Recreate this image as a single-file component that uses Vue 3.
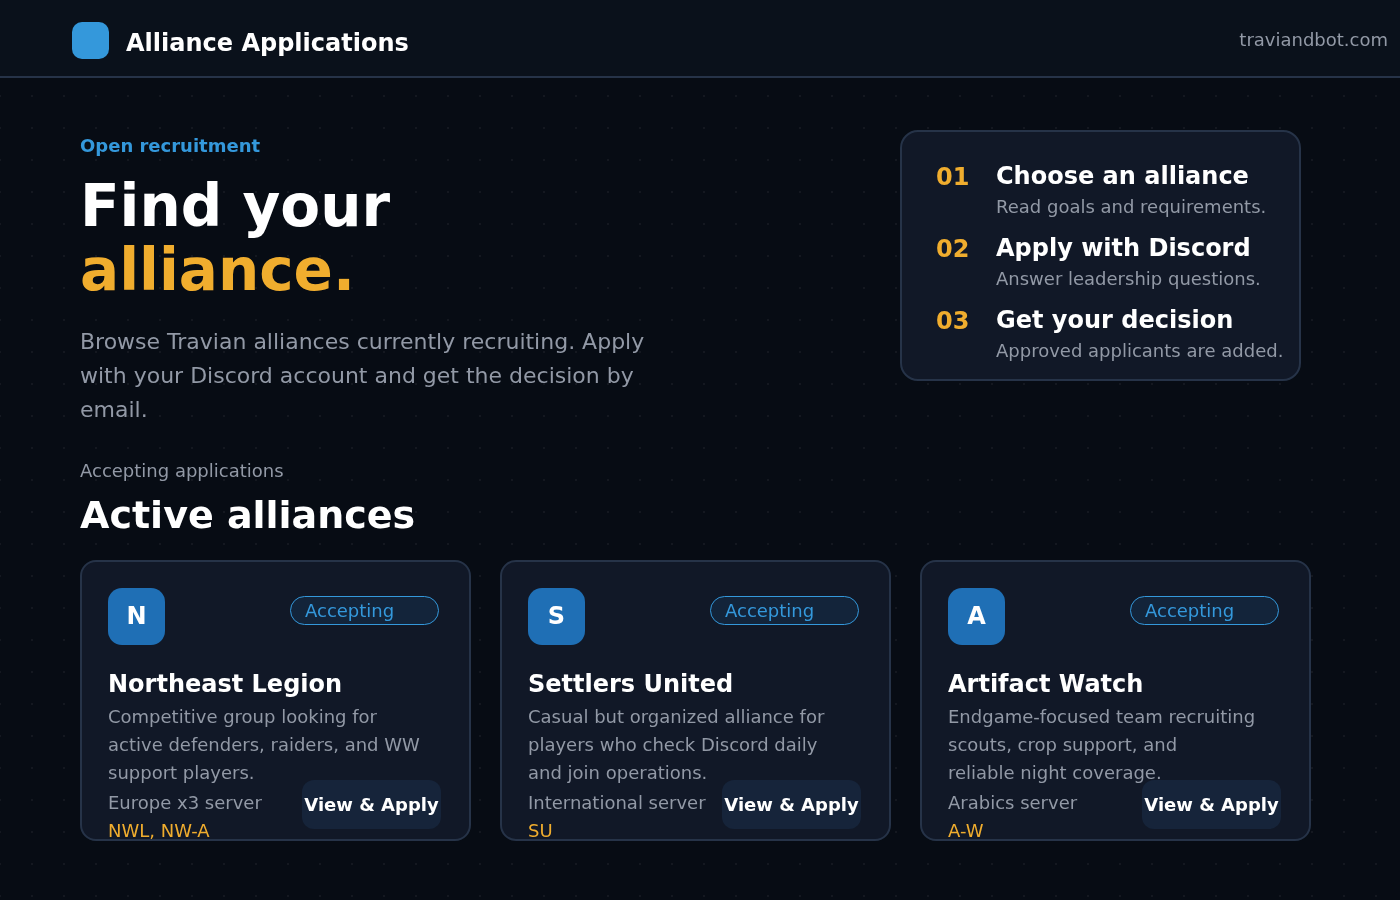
<template>
  <div class="page">
    <header class="topbar">
      <div class="brand">
        <span class="logo"></span>
        <span class="brand-name">Alliance Applications</span>
      </div>
      <a class="site-link">traviandbot.com</a>
    </header>

    <main class="content">
      <section class="hero">
        <div class="hero-text">
          <p class="eyebrow">Open recruitment</p>
          <h1>Find your<br /><span class="accent">alliance.</span></h1>
          <p class="lead">Browse Travian alliances currently recruiting. Apply with your Discord account and get the decision by email.</p>
        </div>
        <ol class="steps">
          <li v-for="step in steps" :key="step.num" class="step">
            <span class="step-num">{{ step.num }}</span>
            <div>
              <div class="step-title">{{ step.title }}</div>
              <div class="step-desc">{{ step.desc }}</div>
            </div>
          </li>
        </ol>
      </section>

      <section class="listing">
        <p class="listing-label">Accepting applications</p>
        <h2>Active alliances</h2>
        <div class="cards">
          <article v-for="a in alliances" :key="a.name" class="card">
            <div class="card-top">
              <span class="avatar">{{ a.name[0] }}</span>
              <span class="badge">Accepting</span>
            </div>
            <h3>{{ a.name }}</h3>
            <p class="card-desc">
              <span v-for="line in a.desc" :key="line" class="desc-line">{{ line }}</span>
            </p>
            <div class="card-foot">
              <div class="card-meta">
                <div class="server">{{ a.server }}</div>
                <div class="tags">{{ a.tags }}</div>
              </div>
              <button class="apply">View &amp; Apply</button>
            </div>
          </article>
        </div>
      </section>
    </main>
  </div>
</template>

<script setup>
const steps = [
  { num: '01', title: 'Choose an alliance', desc: 'Read goals and requirements.' },
  { num: '02', title: 'Apply with Discord', desc: 'Answer leadership questions.' },
  { num: '03', title: 'Get your decision', desc: 'Approved applicants are added.' }
]

const alliances = [
  {
    name: 'Northeast Legion',
    desc: ['Competitive group looking for', 'active defenders, raiders, and WW', 'support players.'],
    server: 'Europe x3 server',
    tags: 'NWL, NW-A'
  },
  {
    name: 'Settlers United',
    desc: ['Casual but organized alliance for', 'players who check Discord daily', 'and join operations.'],
    server: 'International server',
    tags: 'SU'
  },
  {
    name: 'Artifact Watch',
    desc: ['Endgame-focused team recruiting', 'scouts, crop support, and', 'reliable night coverage.'],
    server: 'Arabics server',
    tags: 'A-W'
  }
]
</script>

<style>
html,
body {
  margin: 0;
  background: #070c14;
}
</style>

<style scoped>
.page {
  min-height: 900px;
  box-sizing: border-box;
  font-family: "DejaVu Sans", sans-serif;
  color: #fff;
  background-color: #070c14;
  background-image: radial-gradient(rgba(255, 255, 255, 0.05) 1px, transparent 1px);
  background-size: 32px 32px;
  background-position: -16px -16px;
}

.topbar {
  display: flex;
  justify-content: space-between;
  height: 78px;
  box-sizing: border-box;
  padding: 0 12px 0 72px;
  background: #0a111b;
  border-bottom: 2px solid #263348;
  will-change: transform;
}

.brand {
  display: flex;
  align-items: flex-start;
  gap: 17px;
  padding-top: 22px;
}

.logo {
  width: 37px;
  height: 37px;
  border-radius: 10px;
  background: #3498db;
}

.brand-name {
  font-size: 24px;
  line-height: 42px;
  font-weight: 700;
}

.site-link {
  margin-top: 29px;
  font-size: 18px;
  line-height: 22px;
  color: #9299a6;
}

.content {
  padding: 52px 90px 0 80px;
  will-change: transform;
}

.hero {
  display: flex;
  justify-content: space-between;
  align-items: flex-start;
  width: 1221px;
}

.hero-text {
  width: 580px;
}

.eyebrow {
  margin: 0;
  font-size: 18px;
  line-height: 32px;
  font-weight: 700;
  color: #3498db;
}

h1 {
  margin: 12px 0 0;
  font-size: 58px;
  line-height: 64px;
  font-weight: 700;
}

.accent {
  color: #f0ad2e;
}

.lead {
  margin: 23px 0 0;
  font-size: 22px;
  line-height: 34px;
  color: #9299a6;
}

.steps {
  list-style: none;
  margin: 0;
  width: 401px;
  height: 251px;
  box-sizing: border-box;
  padding: 27px 0 0 34px;
  background: #111827;
  border: 2px solid #263348;
  border-radius: 18px;
}

.step {
  display: flex;
  gap: 26px;
  height: 72px;
}

.step-num {
  width: 34px;
  font-size: 24px;
  line-height: 36px;
  font-weight: 700;
  color: #f0ad2e;
}

.step-title {
  margin-bottom: -1px;
  font-size: 24px;
  line-height: 34px;
  font-weight: 700;
  white-space: nowrap;
}

.step-desc {
  font-size: 18px;
  line-height: 30px;
  color: #9299a6;
  white-space: nowrap;
}

.listing {
  margin-top: 29px;
}

.listing-label {
  margin: 0;
  font-size: 18px;
  line-height: 30px;
  color: #9299a6;
}

h2 {
  margin: 5px 0 0;
  font-size: 38px;
  line-height: 48px;
  font-weight: 700;
}

.cards {
  display: grid;
  grid-template-columns: repeat(3, 391px);
  gap: 29px;
  margin-top: 21px;
}

.card {
  height: 281px;
  box-sizing: border-box;
  padding: 26px;
  overflow: hidden;
  background: #111827;
  border: 2px solid #263348;
  border-radius: 16px;
}

.card-top {
  display: flex;
  justify-content: space-between;
  align-items: flex-start;
}

.avatar {
  display: flex;
  align-items: center;
  justify-content: center;
  width: 57px;
  height: 57px;
  box-sizing: border-box;
  padding-bottom: 2px;
  border-radius: 14px;
  background: #1f6fb5;
  font-size: 24px;
  font-weight: 700;
}

.badge {
  width: 149px;
  height: 29px;
  margin: 8px 4px 0 0;
  box-sizing: border-box;
  padding-left: 14px;
  border: 1px solid #3498db;
  border-radius: 15px;
  background: #13243a;
  color: #3498db;
  font-size: 18px;
  line-height: 27px;
}

h3 {
  margin: 21px 0 0;
  font-size: 24px;
  line-height: 36px;
  font-weight: 700;
}

.card-desc {
  margin: 1px 0 0;
  font-size: 18px;
  line-height: 28px;
  color: #9299a6;
}

.desc-line {
  display: block;
}

.card-foot {
  display: flex;
  justify-content: space-between;
  align-items: flex-start;
  margin-right: 2px;
}

.card-meta {
  font-size: 18px;
  line-height: 28px;
  padding-top: 2px;
  color: #9299a6;
}

.tags {
  color: #f0ad2e;
}

.apply {
  width: 139px;
  height: 49px;
  padding: 0;
  margin-top: -7px;
  border: 0;
  border-radius: 12px;
  background: #16243a;
  color: #fff;
  font-family: inherit;
  font-size: 18px;
  font-weight: 700;
  white-space: nowrap;
}
</style>
